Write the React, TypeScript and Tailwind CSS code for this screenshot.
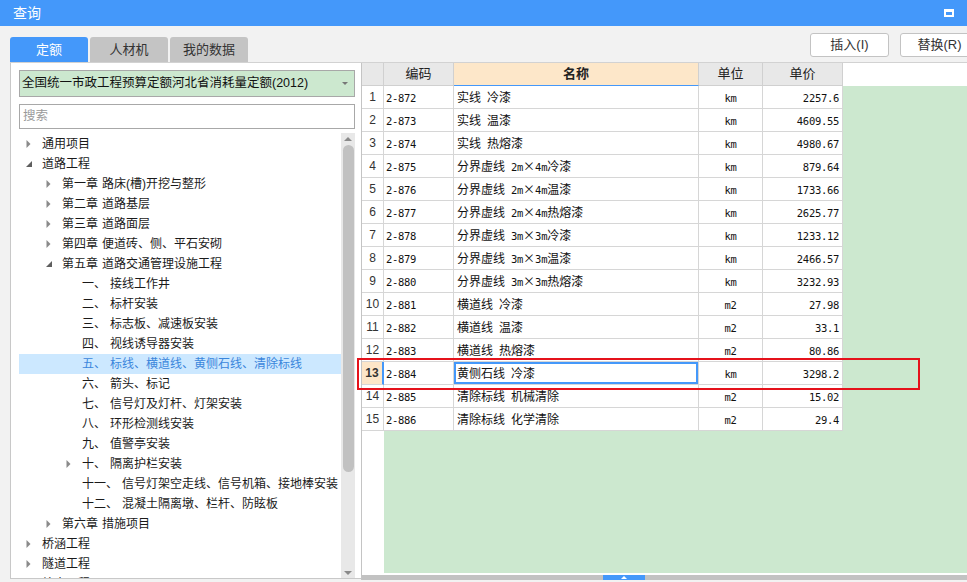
import React from "react";

type TreeNode = {
  level: number;
  prefix?: string;
  label: string;
  arrow?: "r" | "d";
  selected?: boolean;
};

const tree: TreeNode[] = [
  { level: 0, label: "通用项目", arrow: "r" },
  { level: 0, label: "道路工程", arrow: "d" },
  { level: 1, prefix: "第一章", label: "路床(槽)开挖与整形", arrow: "r" },
  { level: 1, prefix: "第二章", label: "道路基层", arrow: "r" },
  { level: 1, prefix: "第三章", label: "道路面层", arrow: "r" },
  { level: 1, prefix: "第四章", label: "便道砖、侧、平石安砌", arrow: "r" },
  { level: 1, prefix: "第五章", label: "道路交通管理设施工程", arrow: "d" },
  { level: 2, prefix: "一、", label: "接线工作井" },
  { level: 2, prefix: "二、", label: "标杆安装" },
  { level: 2, prefix: "三、", label: "标志板、减速板安装" },
  { level: 2, prefix: "四、", label: "视线诱导器安装" },
  { level: 2, prefix: "五、", label: "标线、横道线、黄侧石线、清除标线", selected: true },
  { level: 2, prefix: "六、", label: "箭头、标记" },
  { level: 2, prefix: "七、", label: "信号灯及灯杆、灯架安装" },
  { level: 2, prefix: "八、", label: "环形检测线安装" },
  { level: 2, prefix: "九、", label: "值警亭安装" },
  { level: 2, prefix: "十、", label: "隔离护栏安装", arrow: "r" },
  { level: 2, prefix: "十一、", label: "信号灯架空走线、信号机箱、接地棒安装" },
  { level: 2, prefix: "十二、", label: "混凝土隔离墩、栏杆、防眩板" },
  { level: 1, prefix: "第六章", label: "措施项目", arrow: "r" },
  { level: 0, label: "桥涵工程", arrow: "r" },
  { level: 0, label: "隧道工程", arrow: "r" },
  { level: 0, label: "给水工程", arrow: "r" },
];

const rows: [string, string, string, string][] = [
  ["2-872", "实线 冷漆", "km", "2257.6"],
  ["2-873", "实线 温漆", "km", "4609.55"],
  ["2-874", "实线 热熔漆", "km", "4980.67"],
  ["2-875", "分界虚线 2m×4m冷漆", "km", "879.64"],
  ["2-876", "分界虚线 2m×4m温漆", "km", "1733.66"],
  ["2-877", "分界虚线 2m×4m热熔漆", "km", "2625.77"],
  ["2-878", "分界虚线 3m×3m冷漆", "km", "1233.12"],
  ["2-879", "分界虚线 3m×3m温漆", "km", "2466.57"],
  ["2-880", "分界虚线 3m×3m热熔漆", "km", "3232.93"],
  ["2-881", "横道线 冷漆", "m2", "27.98"],
  ["2-882", "横道线 温漆", "m2", "33.1"],
  ["2-883", "横道线 热熔漆", "m2", "80.86"],
  ["2-884", "黄侧石线 冷漆", "km", "3298.2"],
  ["2-885", "清除标线 机械清除", "m2", "15.02"],
  ["2-886", "清除标线 化学清除", "m2", "29.4"],
];

function Mixed({ text }: { text: string }) {
  const parts: { a: boolean; s: string }[] = [];
  for (const ch of text) {
    const a = ch.charCodeAt(0) < 128;
    const last = parts[parts.length - 1];
    if (last && last.a === a) last.s += ch;
    else parts.push({ a, s: ch });
  }
  return (
    <span className="whitespace-pre">
      {parts.map((p, i) =>
        p.a ? (
          <span key={i} className="font-['DejaVu_Sans_Mono',monospace] text-[10.5px] tracking-[-0.3px]">
            {p.s}
          </span>
        ) : (
          <span key={i} className="font-['Noto_Sans_CJK_SC',sans-serif] text-[12px]">
            {p.s}
          </span>
        )
      )}
    </span>
  );
}

function Arrow({ kind }: { kind: "r" | "d" }) {
  if (kind === "r") {
    return (
      <svg width="5" height="8" viewBox="0 0 5 8">
        <path d="M0.5 0 L4.5 4 L0.5 8 Z" fill="#8a8a8a" />
      </svg>
    );
  }
  return (
    <svg width="6" height="6" viewBox="0 0 6 6">
      <path d="M6 0 L6 6 L0 6 Z" fill="#5e5e5e" />
    </svg>
  );
}

export default function App() {
  return (
    <div className="relative w-[967px] h-[582px] overflow-hidden bg-[#f2f2f2] font-['Liberation_Sans','Noto_Sans_CJK_SC',sans-serif] text-[#1a1a1a]">
      {/* Title bar */}
      <div className="h-[26px] bg-[#4498fa] flex items-center justify-between pl-[13px] pr-[13px]">
        <span className="text-white text-[14px] leading-none">查询</span>
        <div className="w-[10px] h-[8px] border-2 border-t-[3px] border-white" />
      </div>

      {/* Toolbar: tabs + buttons */}
      <div className="h-[36px] flex overflow-hidden">
        <div className="flex items-end gap-[2px] pl-[10px] shrink-0">
          <div className="w-[78px] h-[25px] rounded-t-[3px] bg-[#4498fa] text-white text-[13px] flex items-center justify-center">
            定额
          </div>
          <div className="w-[78px] h-[25px] rounded-t-[3px] bg-[#c4c4c4] text-[#333] text-[13px] flex items-center justify-center">
            人材机
          </div>
          <div className="w-[78px] h-[25px] rounded-t-[3px] bg-[#c4c4c4] text-[#333] text-[13px] flex items-center justify-center">
            我的数据
          </div>
        </div>
        <div className="flex gap-[11px] ml-[562px] mt-[7px] shrink-0">
          <div className="w-[79px] h-[24px] bg-white border border-[#c3c3c3] rounded-[3px] text-[13px] text-[#333] flex items-center justify-center">
            插入(I)
          </div>
          <div className="w-[79px] h-[24px] bg-white border border-[#c3c3c3] rounded-[3px] text-[13px] text-[#333] flex items-center justify-center">
            替换(R)
          </div>
        </div>
      </div>

      {/* Main */}
      <div className="flex ml-[10px] h-[520px] border-t border-[#d2d2d2]">
        {/* Left panel */}
        <div className="w-[351px] h-[516px] bg-white border-l border-b border-[#c8c8c8] flex flex-col pt-[7px] pl-[8px] shrink-0">
          <div className="w-[336px] h-[27px] bg-[#cce8cf] border border-[#a8a8a8] flex items-center justify-between pl-[2px] pr-[6px]">
            <span className="text-[12.5px] text-[#111]">全国统一市政工程预算定额河北省消耗量定额(2012)</span>
            <svg width="6" height="3" viewBox="0 0 6 3">
              <path d="M0 0 L6 0 L3 3 Z" fill="#777" />
            </svg>
          </div>
          <div className="w-[336px] h-[25px] mt-[7px] bg-white border border-[#a8a8a8] flex items-center pl-[3px]">
            <span className="text-[12.5px] text-[#9a9a9a]">搜索</span>
          </div>
          <div className="flex mt-[4px] flex-1 overflow-hidden">
            <div className="w-[322px] flex flex-col overflow-hidden pt-[1px]">
              {tree.map((n, i) => (
                <div
                  key={i}
                  className={
                    "h-[20px] shrink-0 flex items-center text-[12px] whitespace-nowrap " +
                    (n.selected ? "bg-[#cce8ff] text-[#3b86dc]" : "")
                  }
                >
                  <div className="shrink-0" style={{ width: n.level * 20 }} />
                  <div className="w-[23px] shrink-0 flex items-center pl-[7px]">
                    {n.arrow ? <Arrow kind={n.arrow} /> : null}
                  </div>
                  {n.prefix ? <span>{n.prefix}</span> : null}
                  <span className={n.prefix ? "ml-[4px]" : ""}>{n.label}</span>
                </div>
              ))}
            </div>
            <div className="w-[14px] bg-[#e8e8e8] flex flex-col items-center">
              <div className="h-[12px] flex items-center justify-center">
                <svg width="8" height="4" viewBox="0 0 8 4">
                  <path d="M0 4 L4 0 L8 4 Z" fill="#8a8a8a" />
                </svg>
              </div>
              <div className="w-[11px] h-[327px] rounded-full bg-[#c1c1c1]" />
              <div className="flex-1" />
              <div className="h-[10px] flex items-center justify-center">
                <svg width="8" height="4" viewBox="0 0 8 4">
                  <path d="M0 0 L8 0 L4 4 Z" fill="#8a8a8a" />
                </svg>
              </div>
            </div>
          </div>
        </div>

        {/* Right: grid */}
        <div className="flex-1 h-[517px] flex flex-col border-l border-[#c4c4c4]">
          <div className="h-[510px] bg-white flex flex-col overflow-hidden">
            {/* header */}
            <div className="h-[23px] flex shrink-0 text-[13px] text-[#222]">
              <div className="w-[22px] bg-[#e8e8e8] border-r border-b border-[#d0d0d0]" />
              <div className="w-[70px] bg-[#e8e8e8] border-r border-b border-[#d0d0d0] flex items-center justify-center">编码</div>
              <div className="w-[245px] bg-[#fde7c9] border-r border-[#d0d0d0] border-b border-b-[#4498fa] flex items-center justify-center font-bold">名称</div>
              <div className="w-[64px] bg-[#e8e8e8] border-r border-b border-[#d0d0d0] flex items-center justify-center">单位</div>
              <div className="w-[80px] bg-[#e8e8e8] border-r border-b border-[#d0d0d0] flex items-center justify-center">单价</div>
              <div className="flex-1 bg-white" />
            </div>
            {rows.map((r, i) => {
              const sel = i === 12;
              return (
                <div key={i} className="h-[23px] flex shrink-0 text-[#111]">
                  <div
                    className={
                      "w-[22px] border-b border-[#d6d6d6] flex items-center justify-center text-[12px] text-[#333] " +
                      (sel ? "bg-[#fde6c8] font-bold border-r-2 border-r-[#4498fa]" : "border-r")
                    }
                  >
                    {i + 1}
                  </div>
                  <div className="w-[70px] border-r border-b border-[#d6d6d6] flex items-center pl-[2px]">
                    <Mixed text={r[0]} />
                  </div>
                  <div
                    className={
                      "w-[245px] border-r border-b border-[#d6d6d6] flex items-center pl-[3px] " +
                      (sel ? "shadow-[inset_0_0_0_2px_#4498fa]" : "")
                    }
                  >
                    <Mixed text={r[1]} />
                  </div>
                  <div className="w-[64px] border-r border-b border-[#d6d6d6] flex items-center justify-center">
                    <Mixed text={r[2]} />
                  </div>
                  <div className="w-[80px] border-r border-b border-[#d6d6d6] flex items-center justify-end pr-[3px]">
                    <Mixed text={r[3]} />
                  </div>
                  <div className="flex-1 bg-[#cce8cf]" />
                </div>
              );
            })}
            <div className="flex-1 flex">
              <div className="w-[22px] bg-white" />
              <div className="flex-1 bg-[#cce8cf]" />
            </div>
          </div>
          <div className="h-[2px] bg-white" />
          <div className="h-[5px] bg-[#c2c2c2] flex">
            <div className="w-[241px]" />
            <div className="w-[42px] bg-[#4498fa] flex items-center justify-center">
              <svg width="6" height="3" viewBox="0 0 6 3">
                <path d="M0 3 L3 0 L6 3 Z" fill="#fff" />
              </svg>
            </div>
          </div>
        </div>
      </div>

      {/* Red highlight box */}
      <div className="absolute left-[357px] top-[358px] w-[563px] h-[32px] border-2 border-[#e5121b]" />
    </div>
  );
}
